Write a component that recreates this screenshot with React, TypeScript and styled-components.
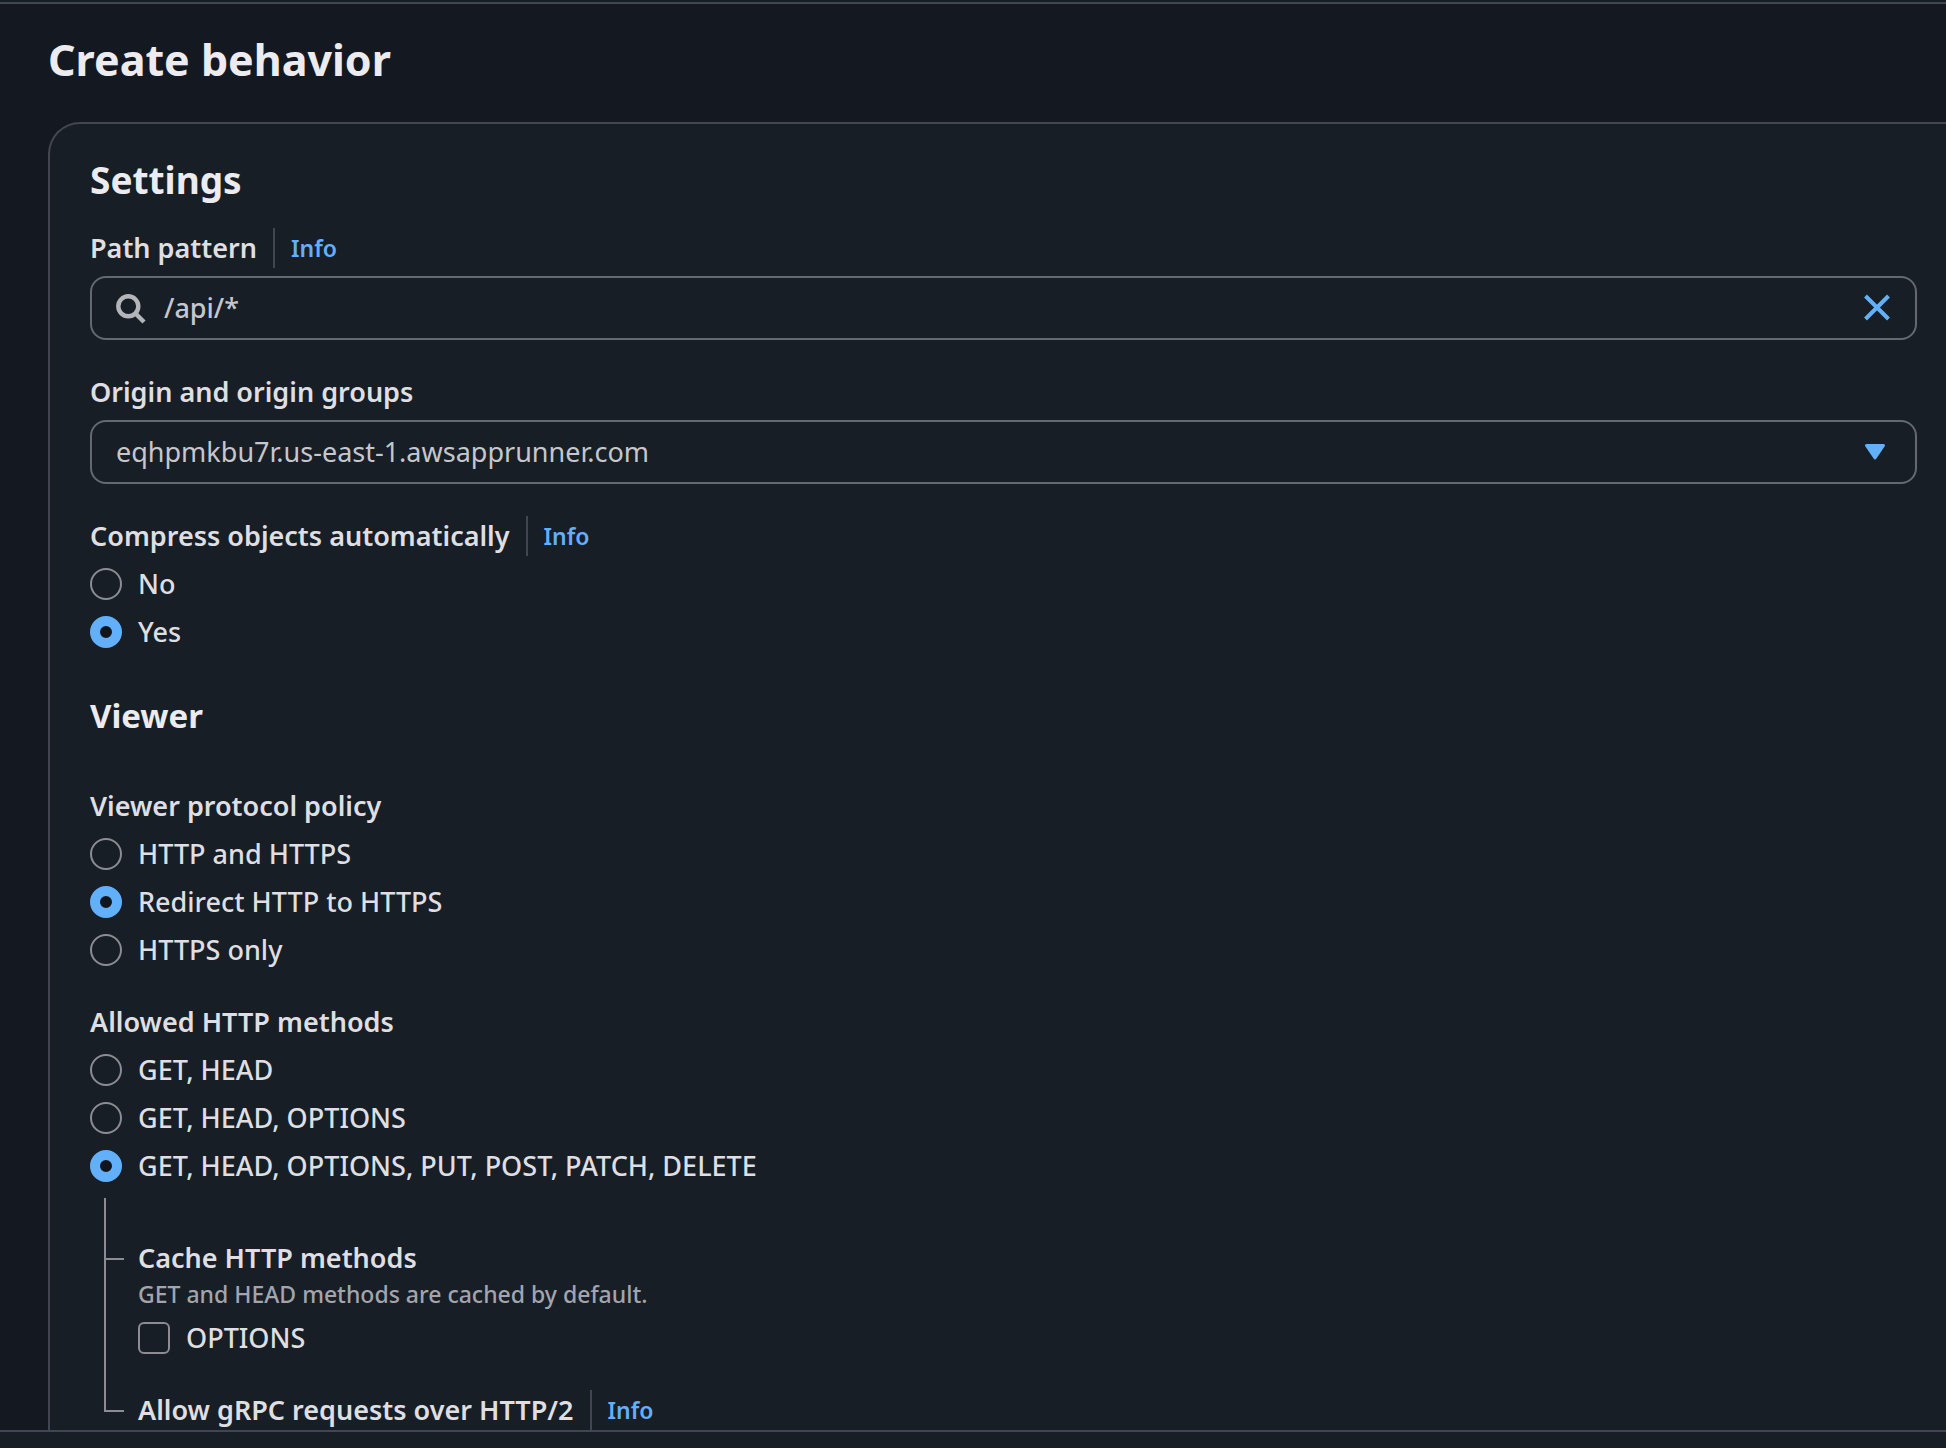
import React, { useId, useState } from "react";
import styled, { createGlobalStyle } from "styled-components";

const color = {
  page: "#141820",
  surface: "#171e25",
  divider: "#424650",
  controlBorder: "#656871",
  choiceBorder: "#8c8c94",
  accent: "#62b0fa",
  heading: "#ebebf0",
  label: "#dedee3",
  value: "#c6c6cd",
  hint: "#a4a4ad",
  onAccent: "#12161c",
};

const GlobalStyle = createGlobalStyle`
  *, *::before, *::after { box-sizing: border-box; }
  body {
    margin: 0;
    background: ${color.page};
    color: ${color.label};
    font-family: "Noto Sans", "Open Sans", sans-serif;
    font-size: 27px;
    line-height: 40px;
  }
`;

const Shell = styled.div`
  display: flex;
  flex-direction: column;
  height: 100vh;
`;

const TopBar = styled.div`
  flex: none;
  height: 4px;
  background: ${color.surface};
  border-bottom: 2px solid ${color.divider};
`;

const BottomBar = styled.footer`
  flex: none;
  height: 18px;
  background: ${color.surface};
  border-top: 2px solid ${color.divider};
`;

const Main = styled.main`
  flex: 1;
  min-height: 0;
  display: flex;
  flex-direction: column;
  padding: 26px 0 0 48px;
  overflow-y: auto;
  scrollbar-width: none;
`;

const PageTitle = styled.h1`
  margin: 0 0 32px;
  font-size: 43px;
  line-height: 60px;
  font-weight: 700;
  color: ${color.heading};
`;

const Card = styled.section`
  flex: 1 0 auto;
  padding: 32px 29px 0 40px;
  background: ${color.surface};
  border: 2px solid ${color.divider};
  border-width: 2px 0 0 2px;
  border-top-left-radius: 32px;
`;

const CardTitle = styled.h2`
  margin: 0 0 24px;
  font-size: 37px;
  line-height: 48px;
  font-weight: 700;
  color: ${color.heading};
`;

const SectionTitle = styled.h3`
  margin: 40px 0 46px;
  font-size: 33px;
  line-height: 48px;
  font-weight: 700;
  color: ${color.heading};
`;

const Stack = styled.div`
  display: flex;
  flex-direction: column;
  gap: 32px;
`;

const Field = styled.div`
  display: flex;
  flex-direction: column;
  gap: 8px;
`;

const LabelRow = styled.div`
  display: flex;
  align-items: center;
  font-weight: 600;
`;

const InfoLink = styled.a`
  margin-left: 16px;
  padding-left: 16px;
  border-left: 2px solid ${color.divider};
  font-size: 23px;
  color: ${color.accent};
  text-decoration: none;
`;

const Hint = styled.div`
  font-size: 23px;
  font-weight: 500;
  line-height: 32px;
  color: ${color.hint};
`;

const Control = styled.div`
  display: flex;
  align-items: center;
  gap: 18px;
  height: 64px;
  padding: 0 22px;
  border: 2px solid ${color.controlBorder};
  border-radius: 16px;
`;

const TextInput = styled.input`
  flex: 1;
  min-width: 0;
  padding: 0;
  border: 0;
  outline: 0;
  background: none;
  font: inherit;
  font-weight: 500;
  color: ${color.value};
`;

const IconButton = styled.button`
  display: flex;
  padding: 0;
  border: 0;
  background: none;
  color: ${color.accent};
  cursor: pointer;
`;

const Icon = styled.svg`
  flex: none;
  width: 32px;
  height: 32px;
  fill: none;
  stroke: currentColor;
`;

const SearchIcon = styled(Icon)`
  color: #b4b4bb;
`;

const SelectBox = styled.div`
  display: grid;
  align-items: center;

  > * {
    grid-area: 1 / 1;
  }
`;

const Select = styled.select`
  appearance: none;
  width: 100%;
  height: 64px;
  padding: 0 72px 0 24px;
  border: 2px solid ${color.controlBorder};
  border-radius: 16px;
  background: none;
  font: inherit;
  color: ${color.value};
`;

const Caret = styled(Icon)`
  justify-self: end;
  margin-right: 26px;
  color: ${color.accent};
  pointer-events: none;
`;

const Choice = styled.label`
  display: flex;
  align-items: center;
  gap: 16px;
  align-self: flex-start;
  font-weight: 500;
  cursor: pointer;
`;

const Radio = styled.input`
  appearance: none;
  flex: none;
  width: 32px;
  height: 32px;
  margin: 0;
  border: 2px solid ${color.choiceBorder};
  border-radius: 50%;

  &:checked {
    border: 10px solid ${color.accent};
    background: ${color.onAccent};
  }
`;

const Checkbox = styled.input`
  appearance: none;
  flex: none;
  width: 32px;
  height: 32px;
  margin: 0;
  border: 2px solid ${color.choiceBorder};
  border-radius: 6px;

  &:checked {
    border-color: ${color.accent};
    background: ${color.accent};
  }
`;

const Tree = styled.div`
  margin: 12px 0 0 14px;
`;

const Branch = styled.div`
  display: grid;
  grid-template-columns: 20px 1fr;
  column-gap: 14px;
`;

const Connector = styled.div<{ $drop: number; $last?: boolean }>`
  display: flex;
  flex-direction: column;

  &::before {
    content: "";
    height: ${(p) => p.$drop}px;
    border: solid ${color.choiceBorder};
    border-width: 0 0 2px 2px;
  }

  &::after {
    content: "";
    flex: 1;
    border-left: 2px solid ${(p) => (p.$last ? "transparent" : color.choiceBorder)};
  }
`;

const BranchBody = styled.div`
  padding: 40px 0 32px;
`;

function InfoLabel({ text, htmlFor, info }: { text: string; htmlFor?: string; info?: boolean }) {
  return (
    <LabelRow>
      {htmlFor ? <label htmlFor={htmlFor}>{text}</label> : <span>{text}</span>}
      {info && <InfoLink href="#info">Info</InfoLink>}
    </LabelRow>
  );
}

interface RadioFieldProps {
  label: string;
  info?: boolean;
  options: string[];
  initial: string;
}

function RadioField({ label, info, options, initial }: RadioFieldProps) {
  const name = useId();
  const [value, setValue] = useState(initial);
  return (
    <Field role="radiogroup" aria-label={label}>
      <InfoLabel text={label} info={info} />
      {options.map((option) => (
        <Choice key={option}>
          <Radio type="radio" name={name} checked={value === option} onChange={() => setValue(option)} />
          <span>{option}</span>
        </Choice>
      ))}
    </Field>
  );
}

export default function App() {
  const [path, setPath] = useState("/api/*");

  return (
    <Shell>
      <GlobalStyle />
      <TopBar />
      <Main>
        <PageTitle>Create behavior</PageTitle>
        <Card>
          <CardTitle>Settings</CardTitle>
          <Stack>
            <Field>
              <InfoLabel text="Path pattern" htmlFor="path" info />
              <Control>
                <SearchIcon viewBox="0 0 32 32" strokeWidth="4.4" aria-hidden="true">
                  <circle cx="14.3" cy="14.3" r="10" />
                  <path d="M21 21l9 9" />
                </SearchIcon>
                <TextInput id="path" value={path} onChange={(e) => setPath(e.target.value)} />
                <IconButton type="button" aria-label="Clear" onClick={() => setPath("")}>
                  <Icon viewBox="0 0 32 32" strokeWidth="4" aria-hidden="true">
                    <path d="M4.500 4l23 23M27.500 4l-23 23" />
                  </Icon>
                </IconButton>
              </Control>
            </Field>
            <Field>
              <InfoLabel text="Origin and origin groups" htmlFor="origin" />
              <SelectBox>
                <Select id="origin">
                  <option>eqhpmkbu7r.us-east-1.awsapprunner.com</option>
                </Select>
                <Caret viewBox="0 0 32 32" strokeWidth="3" strokeLinejoin="round" aria-hidden="true">
                  <path d="M7.500 9.500h17L16 22z" fill="currentColor" />
                </Caret>
              </SelectBox>
            </Field>
            <RadioField label="Compress objects automatically" info options={["No", "Yes"]} initial="Yes" />
          </Stack>

          <SectionTitle>Viewer</SectionTitle>
          <Stack>
            <RadioField
              label="Viewer protocol policy"
              options={["HTTP and HTTPS", "Redirect HTTP to HTTPS", "HTTPS only"]}
              initial="Redirect HTTP to HTTPS"
            />
            <RadioField
              label="Allowed HTTP methods"
              options={["GET, HEAD", "GET, HEAD, OPTIONS", "GET, HEAD, OPTIONS, PUT, POST, PATCH, DELETE"]}
              initial="GET, HEAD, OPTIONS, PUT, POST, PATCH, DELETE"
            />
          </Stack>

          <Tree>
            <Branch>
              <Connector $drop={62} />
              <BranchBody>
                <Field role="group" aria-label="Cache HTTP methods">
                  <div>
                    <InfoLabel text="Cache HTTP methods" />
                    <Hint>GET and HEAD methods are cached by default.</Hint>
                  </div>
                  <Choice>
                    <Checkbox type="checkbox" />
                    <span>OPTIONS</span>
                  </Choice>
                </Field>
              </BranchBody>
            </Branch>
            <Branch>
              <Connector $drop={22} $last />
              <InfoLabel text="Allow gRPC requests over HTTP/2" info />
            </Branch>
          </Tree>
        </Card>
      </Main>
      <BottomBar />
    </Shell>
  );
}
